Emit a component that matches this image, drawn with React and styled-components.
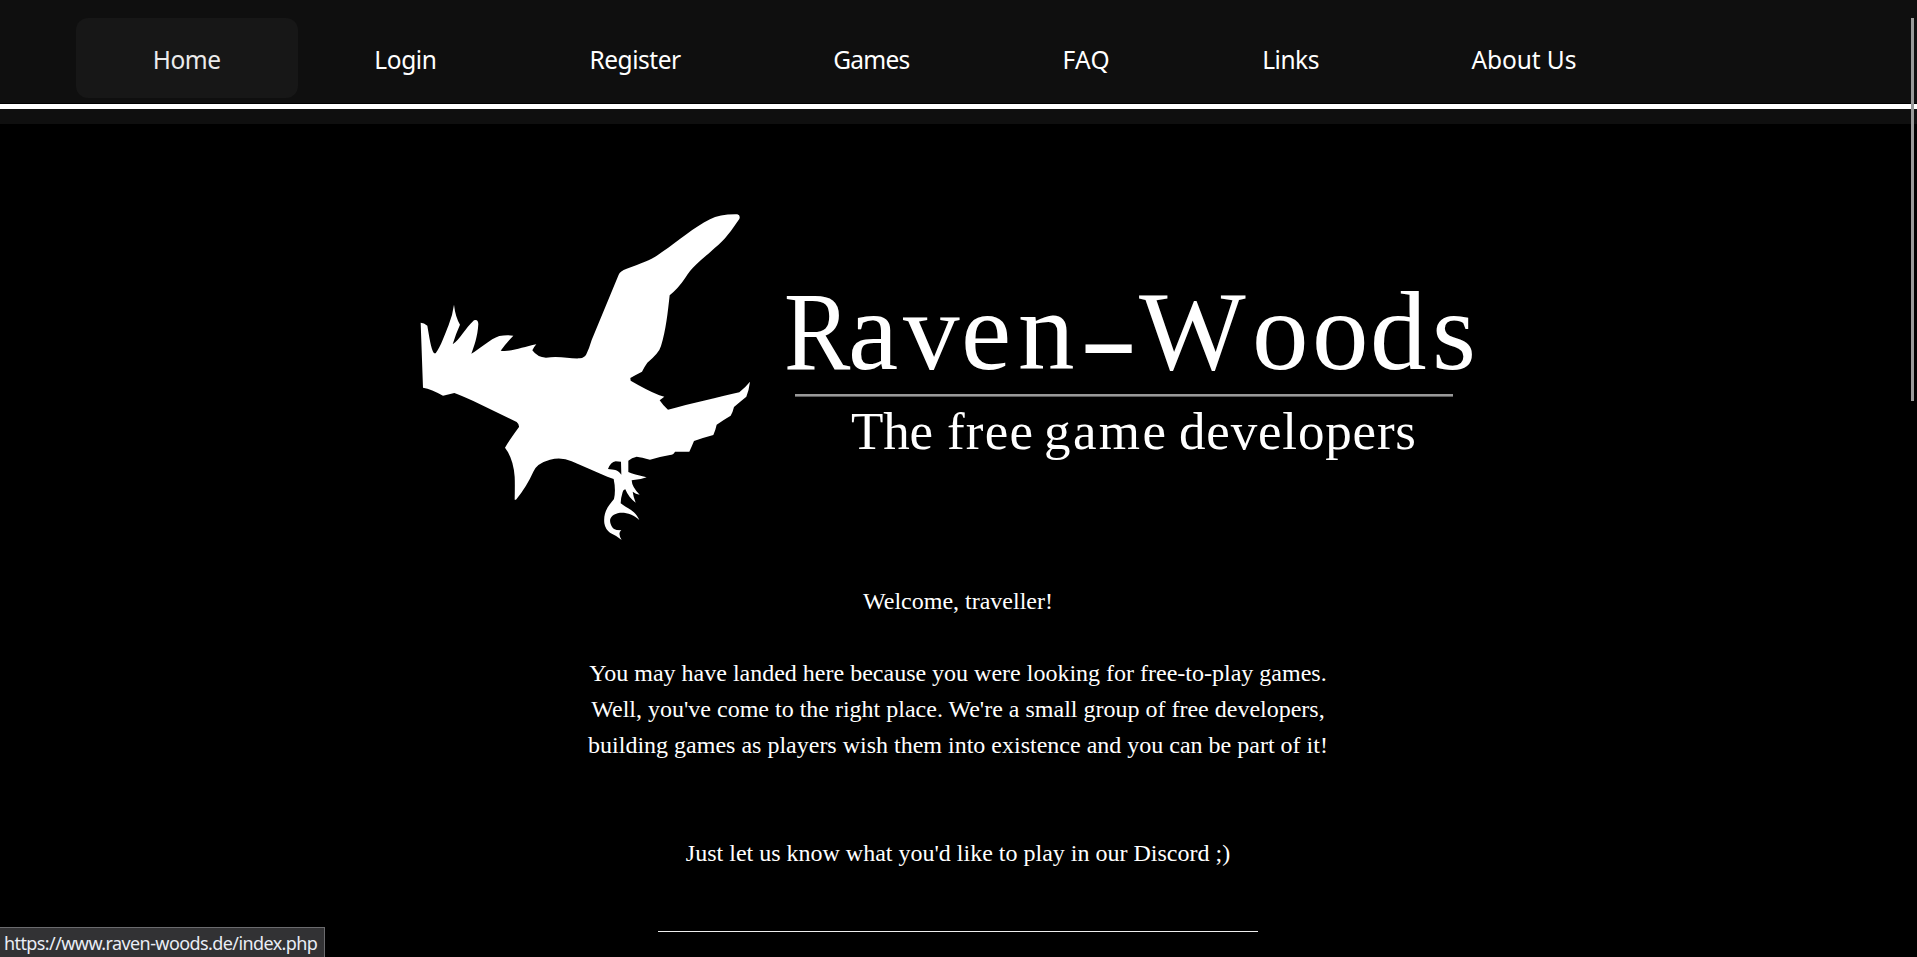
import React from 'react';
import styled, { createGlobalStyle } from 'styled-components';

const GlobalStyle = createGlobalStyle`
  html, body { margin: 0; padding: 0; background: #000; }
  body { height: 957px; overflow: hidden; position: relative; }
`;

const Page = styled.div`
  height: 957px;
  overflow: hidden;
  background: #000;
  color: #fff;
  font-family: 'Liberation Serif', serif;
`;

const Header = styled.header`
  height: 124px;
  background: #0f0f0f;
  display: flex;
  flex-direction: column;
`;

const Nav = styled.nav`
  display: flex;
  height: 85px;
  padding: 18px 76px 0;
  border-bottom: 1px solid #000;
`;

const NavItem = styled.a`
  box-sizing: border-box;
  width: ${(p) => p.$width + 153.4}px;
  height: 80px;
  padding: 2px 0 0 76.7px;
  border-radius: 12px;
  display: flex;
  align-items: center;
  white-space: nowrap;
  background: ${(p) => (p.$active ? '#171717' : 'transparent')};
  color: ${(p) => (p.$active ? '#ebebeb' : '#fff')};
  font: 24.5px 'Noto Sans', sans-serif;
  letter-spacing: ${(p) => p.$spacing}px;
`;

const Rule = styled.div`
  height: 5px;
  background: #fff;
`;

const Main = styled.main`
  display: flex;
  flex-direction: column;
  align-items: center;
  width: 1916px;
`;

const Logo = styled.svg`
  display: block;
  width: 1117px;
  height: 360px;
  margin-top: 76px;
  margin-left: 1px;
`;

const Copy = styled.p`
  margin: 23px 0 0;
  width: 900px;
  text-align: center;
  font-size: 24px;
  line-height: 36px;
`;

const Divider = styled.hr`
  width: 600px;
  height: 1px;
  border: 0;
  margin: 60px 0 0;
  background: #eee;
`;

const StatusBar = styled.div`
  position: absolute;
  left: 0;
  bottom: 0;
  box-sizing: border-box;
  width: 325px;
  height: 30px;
  padding-left: 4px;
  border: solid #6b6b6e;
  border-width: 1px 1px 0 0;
  background: #323234;
  color: #e9edf5;
  font: 18px/31px 'Noto Sans', sans-serif;
  letter-spacing: -0.59px;
  white-space: nowrap;
`;

const ScrollThumb = styled.div`
  position: absolute;
  top: 18px;
  right: 3px;
  width: 3px;
  height: 383px;
  background: #999;
`;

const links = [
  { label: 'Home', width: 68.1, spacing: -0.4, active: true },
  { label: 'Login', width: 61.8, spacing: -0.35 },
  { label: 'Register', width: 90.5, spacing: -0.45 },
  { label: 'Games', width: 75.9, spacing: -0.75 },
  { label: 'FAQ', width: 46.2, spacing: 0.3 },
  { label: 'Links', width: 56, spacing: -0.45 },
  { label: 'About Us', width: 105, spacing: -0.1 },
];

const raven = `M62 368 Q72 368 82 377 C88 410 92 445 102 460 L107 460
C122 440 136 400 146 375 Q158 345 162 314 Q166 350 180 374 Q168 400 158 433
C180 420 195 385 222 361 Q234 356 235 372 C233 410 222 440 214 461
C240 447 270 417 298 408 Q320 404 340 407 Q318 430 302 452
C340 456 370 440 409 433 Q401 442 397 451 Q412 472 438 473 C480 467 510 477 540 475
Q553 474 559 463 Q567 447 575 420 L656 224 Q660 213 680 206 C730 187 750 183 785 157
C840 120 880 83 930 58 Q960 42 1012 43 Q1022 46 1018 57
C995 90 975 120 945 143 C905 180 880 195 855 235 Q835 265 809 286
C803 340 798 390 783 438 Q778 458 742 488 Q732 502 726 515 Q710 523 691 534
L692 542 Q740 570 778 586 L793 590 L779 601 Q790 618 804 629
C870 612 960 590 1018 577 Q1038 560 1050 545 Q1047 570 1039 590
Q1018 607 1002 621 Q998 638 992 647 Q970 660 950 674 Q946 692 940 705
Q910 713 882 723 Q875 740 868 755 Q845 755 825 755 Q820 765 810 765
Q780 770 750 779 Q725 772 710 770 Q695 773 685 782 L685 816
Q700 823 740 832 Q720 840 695 841 Q696 862 719 884 Q707 882 698 875
Q700 890 707 908 Q686 893 676 868 Q670 868 668 876 Q662 895 662 910
C680 925 705 930 718 960 C700 943 682 937 660 938
C635 943 626 955 632 972 Q637 988 650 990 L664 991 Q652 998 665 1020
Q650 1007 630 998 Q616 988 613 970 C610 940 620 923 642 897
Q648 870 641 837 L622 830 L515 784 Q485 770 450 779 Q410 790 400 815
Q380 860 348 899 L344 899 Q345 850 344 830 Q340 775 315 743
Q325 725 357 681 Q358 673 350 666 L220 603 Q180 585 163 579 L129 587
Q95 568 69 563 Z
M663 785 L664 824 Q655 811 642 809 L624 807 Q632 786 647 784 Z`;

function RavenLogo() {
  return (
    <Logo viewBox="400 200 1117 360" role="img" aria-label="Raven-Woods">
      <g transform="translate(400 200) scale(0.33333)">
        <path d={raven} fill="#fff" fillRule="evenodd" />
      </g>
      <g fill="#fff" fontFamily="Liberation Serif, serif">
        <g fontSize="113">
          <text transform="translate(784 368.5) scale(0.88 1)">R</text>
          <text y="368.5" x="848 903 961 1018">aven</text>
          <text transform="translate(1079 375) scale(1.57 1)">-</text>
          <text y="368.5" x="1139 1252 1312 1370 1432">Woods</text>
        </g>
        <g fontSize="53">
          <text x="851" y="449" textLength="82">The</text>
          <text x="947" y="449" textLength="86">free</text>
          <text x="1044" y="449" textLength="122">game</text>
          <text x="1179" y="449" textLength="237">developers</text>
        </g>
      </g>
      <rect x="795" y="394" width="658" height="2.6" fill="#999" />
    </Logo>
  );
}

export default function App() {
  return (
    <Page>
      <GlobalStyle />
      <Header>
        <Nav>
          {links.map((l) => (
            <NavItem key={l.label} $width={l.width} $spacing={l.spacing} $active={l.active}>
              {l.label}
            </NavItem>
          ))}
        </Nav>
        <Rule />
      </Header>
      <Main>
        <RavenLogo />
        <Copy>
          Welcome, traveller!
          <br />
          <br />
          You may have landed here because you were looking for free-to-play games.
          <br />
          Well, you've come to the right place. We're a small group of free developers,
          <br />
          building games as players wish them into existence and you can be part of it!
          <br />
          <br />
          <br />
          Just let us know what you'd like to play in our Discord ;)
        </Copy>
        <Divider />
      </Main>
      <StatusBar>https://www.raven-woods.de/index.php</StatusBar>
      <ScrollThumb />
    </Page>
  );
}
